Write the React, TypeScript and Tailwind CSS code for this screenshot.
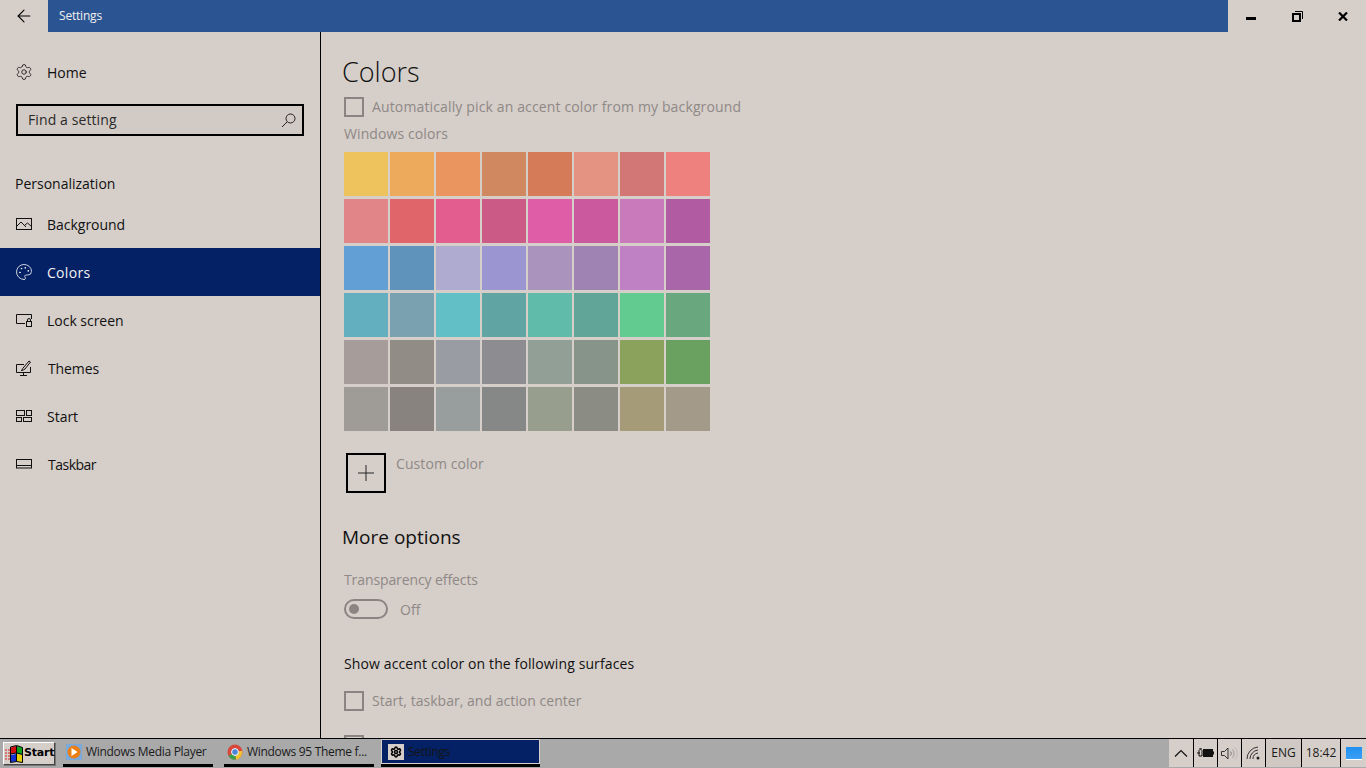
import React from "react";
import { ArrowLeft, Settings as Gear, Palette, Plus } from "lucide-react";

const swatches = [
  ["#eec35d", "#eeaa5c", "#ea955f", "#cf8860", "#d67b58", "#e49383", "#d27776", "#ee807d"],
  ["#e28589", "#df656b", "#e35d8f", "#cb5b86", "#df5ca6", "#ca5a9d", "#c87abb", "#b05ba2"],
  ["#619fd4", "#5f93bb", "#aeaad0", "#9b96d1", "#aa93bd", "#9f84b3", "#bf81c4", "#a967a9"],
  ["#63afc0", "#7aa1b0", "#61bfc5", "#61a4a4", "#61bbaa", "#60a598", "#61cb90", "#69a77e"],
  ["#a69c99", "#928c87", "#9a9ca4", "#8c8c91", "#919f96", "#87948a", "#8aa25c", "#6ba160"],
  ["#9f9b97", "#88837e", "#989e9d", "#868787", "#979e8d", "#8b8c83", "#a59b78", "#a39a89"],
];

const ImageIcon = () => (
  <svg width="16" height="12" viewBox="0 0 16 12" fill="none" stroke="currentColor" strokeWidth="1">
    <rect x="0.5" y="0.5" width="15" height="11" />
    <path d="M1 8l4-4 5 5M9 7l2.5-2 4 3.5" />
  </svg>
);
const LockIcon = () => (
  <svg width="16" height="13" viewBox="0 0 16 13" fill="none" stroke="currentColor" strokeWidth="1">
    <path d="M9 9.5H0.5V0.5H15.5V5" />
    <rect x="10.5" y="7.5" width="5" height="5" />
    <path d="M11.5 7.5V6a1.5 1.5 0 0 1 3 0v1.5" />
  </svg>
);
const ThemesIcon = () => (
  <svg width="16" height="16" viewBox="0 0 16 16" fill="none" stroke="currentColor" strokeWidth="1">
    <path d="M8 4.5H0.5V12.5H14.5V7" />
    <path d="M7.5 12.5v2.5M4 15.5h7" />
    <path d="M5 10.5c1 0 1.5-1 1.5-1.800L13 1l1.500 1-5.500 7c-1 .8-2.500 1.500-4 1.500z" />
  </svg>
);
const StartIcon = () => (
  <svg width="16" height="12" viewBox="0 0 16 12" fill="none" stroke="currentColor" strokeWidth="1">
    <rect x="0.5" y="0.5" width="8" height="5" />
    <rect x="10.500" y="0.5" width="5" height="5" />
    <rect x="0.5" y="7.500" width="5" height="4" />
    <rect x="7.500" y="7.500" width="8" height="4" />
  </svg>
);
const TaskbarIcon = () => (
  <svg width="16" height="10" viewBox="0 0 16 10" fill="none" stroke="currentColor" strokeWidth="1">
    <rect x="0.5" y="0.5" width="15" height="8.500" />
    <path d="M0.5 6.500h15" />
  </svg>
);

const font = "font-['Open_Sans','Noto_Sans',sans-serif]";

function NavItem({ icon, label, active, labelClass }: { icon: React.ReactNode; label: string; active?: boolean; labelClass?: string }) {
  return (
    <div
      className={
        active
          ? "h-12 flex items-center bg-[#042165] text-[#f2f2f2]"
          : "h-12 flex items-center text-[#111]"
      }
    >
      <div className="w-[47px] pl-4 flex items-center">{icon}</div>
      <span className={labelClass ?? "text-[14px] tracking-[-0.02px]"}>{label}</span>
    </div>
  );
}

function Check({ label, tracking }: { label: string; tracking: string }) {
  return (
    <div className="flex items-center gap-2 h-5">
      <div className="w-5 h-5 border-2 border-[#8a8583] shrink-0" />
      <span className={`text-[14px] ${tracking} pb-[2px] text-[#8e8986] whitespace-nowrap`}>{label}</span>
    </div>
  );
}

function TaskButton({ icon, label, active }: { icon: React.ReactNode; label: string; active?: boolean }) {
  return (
    <div className="w-full h-full flex flex-col justify-end">
      <div
        className={
          active
            ? "flex-1 flex items-center gap-1 pl-[6px] bg-[#042165] text-[#141414] border-x border-t border-[#d6cec9]"
            : "flex-1 flex items-center gap-1 pl-[3px] text-[#1b1b1b]"
        }
      >
        {icon}
        <span className="text-[12px] tracking-[-0.3px] pt-px whitespace-nowrap">{label}</span>
      </div>
      <div className={active ? "h-1 bg-black border-t border-[#d6cec9]" : "h-[3px] bg-black"} />
    </div>
  );
}

function Tray({ w, tone, children }: { w: string; tone?: string; children: React.ReactNode }) {
  return (
    <div className={`${w} h-full ${tone ?? "bg-[#d6cec9]"} flex items-center justify-center text-[12px] text-[#1b1b1b]`}>
      {children}
    </div>
  );
}

export default function App() {
  return (
    <div className={`${font} w-[1366px] h-[768px] overflow-hidden flex flex-col bg-[#d6cec9]`}>
      <header className="h-8 flex shrink-0">
        <div className="w-12 flex items-center justify-center text-black">
          <ArrowLeft size={20} strokeWidth={1.3} />
        </div>
        <div className="flex-1 bg-[#2b5592] flex items-center pl-[11px] text-[12px] tracking-[-0.2px] text-[#f0f0f0]">Settings</div>
        <div className="w-[138px] flex text-black">
          <div className="flex-1 flex items-center justify-center">
            <div className="w-[10px] h-[3px] bg-black mt-[5px]" />
          </div>
          <div className="flex-1 flex items-center justify-center">
            <svg width="11" height="11" viewBox="0 0 11 11" fill="none" stroke="black">
              <rect x="1" y="3" width="7" height="7" strokeWidth="2" />
              <path d="M3 .5h7.500V8" strokeWidth="1" />
            </svg>
          </div>
          <div className="flex-1 flex items-center justify-center">
            <svg width="10" height="9" viewBox="0 0 10 9" stroke="black" strokeWidth="2.200">
              <path d="M1 .5l8 8M9 .5l-8 8" />
            </svg>
          </div>
        </div>
      </header>

      <main className="flex-1 flex min-h-0 overflow-hidden">
        <aside className="w-[321px] shrink-0 border-r border-black flex flex-col">
          <div className="h-[48px] mt-4 flex items-center text-[#111]">
            <div className="w-[47px] pl-[15px] flex items-center"><Gear size={18} strokeWidth={1.1} /></div>
            <span className="text-[14px]">Home</span>
          </div>
          <div className="mx-4 mt-2 h-8 w-[288px] border-2 border-black bg-[#d2cac5] flex items-center justify-between pl-[10px] pr-[6px]">
            <span className="text-[14px] tracking-[0.1px] pb-[2px] text-[#2a2a2a]">Find a setting</span>
            <svg width="15" height="15" viewBox="0 0 15 15" fill="none" stroke="#222" strokeWidth="1">
              <circle cx="9.500" cy="5.500" r="4.500" />
              <path d="M6.200 8.800L1 14" />
            </svg>
          </div>
          <div className="mt-[35px] pl-[15px] h-[24px] flex items-center text-[14px] text-[#111]">Personalization</div>
          <div className="mt-[5px]">
            <NavItem icon={<ImageIcon />} label="Background" />
            <NavItem icon={<Palette size={18} strokeWidth={1.1} className="-ml-px" />} label="Colors" labelClass="text-[14px] tracking-[0.3px]" active />
            <NavItem icon={<LockIcon />} label="Lock screen" />
            <NavItem icon={<ThemesIcon />} label="Themes" labelClass="text-[14px] tracking-[-0.1px] ml-px" />
            <NavItem icon={<StartIcon />} label="Start" />
            <NavItem icon={<TaskbarIcon />} label="Taskbar" labelClass="text-[14px] tracking-[-0.5px] ml-px" />
          </div>
        </aside>

        <section className="flex-1 pl-[23px] min-w-0 overflow-hidden">
          <h1 className="mt-[19px] h-[42px] -ml-[2px] flex items-center text-[27px] font-light text-[#111]">Colors</h1>
          <div className="mt-[4px]"><Check label="Automatically pick an accent color from my background" tracking="tracking-[0.14px]" /></div>
          <div className="mt-[6px] h-5 flex items-center text-[14px] tracking-[0.1px] text-[#8e8986]">Windows colors</div>
          <div className="mt-[9px] flex flex-col gap-[3px]">
            {swatches.map((row, i) => (
              <div key={i} className="flex gap-[2px]">
                {row.map((c) => (
                  <div key={c} className="w-11 h-11" style={{ backgroundColor: c }} />
                ))}
              </div>
            ))}
          </div>
          <div className="mt-[22px] ml-[2px] flex items-start gap-[10px]">
            <div className="w-10 h-10 border-2 border-black flex items-center justify-center text-[#222]">
              <Plus size={26} strokeWidth={0.9} />
            </div>
            <span className="h-5 flex items-center text-[14px] tracking-[0.08px] text-[#8e8986]">Custom color</span>
          </div>
          <h2 className="mt-[29px] -ml-[2px] h-[30px] flex items-center text-[19px] text-[#111]">More options</h2>
          <div className="mt-[17px] h-5 flex items-center text-[14px] tracking-[-0.1px] text-[#8e8986]">Transparency effects</div>
          <div className="mt-[10px] flex items-center gap-[12px] h-5">
            <div className="w-11 h-5 rounded-full border-2 border-[#8a8583] flex items-center pl-[3px]">
              <div className="w-[10px] h-[10px] rounded-full bg-[#8a8583]" />
            </div>
            <span className="text-[14px] text-[#8e8986]">Off</span>
          </div>
          <div className="mt-[34px] h-5 flex items-center text-[14px] tracking-[0.12px] text-[#111]">Show accent color on the following surfaces</div>
          <div className="mt-[18px]"><Check label="Start, taskbar, and action center" tracking="tracking-[0.03px]" /></div>
          <div className="mt-[24px]"><Check label="" tracking="" /></div>
        </section>
      </main>

      <footer className="h-[30px] shrink-0 bg-[#a9a9a9] border-t border-black flex pb-px">
        <div className="ml-[3px] mt-[3px] w-[52px] h-[23px] bg-[#d6cec9] border border-t-white border-l-white border-r-[#444] border-b-[#444] flex items-center pl-[1px] shadow-[1px_1px_0_#777]">
          <svg width="19" height="18" viewBox="0 0 19 18" className="shrink-0">
            <path d="M6 2.500l5-1.500v7l-5 1z" fill="#d01010" />
            <path d="M12 1l5 1.500v7L12 8z" fill="#10a020" />
            <path d="M6 10l5-1v7.500L6 17z" fill="#1030d0" />
            <path d="M12 9l5 1v7l-5-.5z" fill="#e8d000" />
            <path d="M5.500 2l6-1.500 6 2v15l-6-1-6 1z" fill="none" stroke="black" />
            <path d="M11.500 1v16M5.500 9l6-1 6 1.500" fill="none" stroke="black" />
            <path d="M0 5h5M0 8h5M0 11h5M0 14h5" stroke="#d02020" strokeDasharray="2 1" />
          </svg>
          <span className="text-[11px] font-bold text-black font-['DejaVu_Sans',sans-serif] tracking-[-0.2px]">Start</span>
        </div>
        <div className="ml-2 h-full w-[150px]">
          <TaskButton
            label="Windows Media Player"
            icon={
              <svg width="16" height="16" viewBox="0 0 16 16" className="shrink-0">
                <rect x="0" y="0" width="16" height="16" rx="1" fill="#7aa9dc" />
                <circle cx="8" cy="8" r="6.500" fill="#ec7f13" />
                <path d="M5.500 4l6 4-6 4z" fill="white" />
              </svg>
            }
          />
        </div>
        <div className="ml-[11px] h-full w-[150px]">
          <TaskButton
            label="Windows 95 Theme f..."
            icon={
              <svg width="16" height="16" viewBox="0 0 16 16" className="shrink-0">
                <circle cx="8" cy="8" r="7.500" fill="#d9463a" />
                <path d="M8 8L1.500 12a7.500 7.500 0 0 0 7.500 3.500z" fill="#3a9f4b" />
                <path d="M8 8l7.200-1.200A7.500 7.500 0 0 1 9 15.500z" fill="#f2c230" />
                <circle cx="8" cy="8" r="3.400" fill="#4a86d8" stroke="white" />
              </svg>
            }
          />
        </div>
        <div className="ml-[7px] h-full w-[159px]">
          <TaskButton
            active
            label="Settings"
            icon={
              <div className="w-4 h-4 bg-[#d6cec9] flex items-center justify-center text-black">
                <Gear size={12} strokeWidth={3} />
              </div>
            }
          />
        </div>
        <div className="flex-1" />
        <div className="flex gap-px bg-black h-full">
          <Tray w="w-6">
            <svg width="14" height="8" viewBox="0 0 14 8" fill="none" stroke="#111" strokeWidth="1.200"><path d="M1 7.500L7 1.500l6 6" /></svg>
          </Tray>
          <Tray w="w-[23px]">
            <svg width="17" height="11" viewBox="0 0 17 11">
              <rect x="6" y="1" width="10" height="8" fill="#111" />
              <rect x="16" y="3.500" width="1" height="3" fill="#111" />
              <path d="M0 5h3M2 2v6h3V2M3 0v2M4 0v2" stroke="#111" fill="none" />
            </svg>
          </Tray>
          <Tray w="w-[23px]">
            <svg width="17" height="15" viewBox="0 0 17 15" fill="none" stroke="#333" strokeWidth="1">
              <path d="M.5 5.500h3L7 2v11L3.500 9.500h-3z" />
              <path d="M9.500 5.500a3 3 0 0 1 0 4" stroke="#777" />
              <path d="M11.500 3.500a6 6 0 0 1 0 8" stroke="#999" />
              <path d="M13.500 1.500a8 8 0 0 1 0 12" stroke="#bbb" />
            </svg>
          </Tray>
          <Tray w="w-[23px]">
            <svg width="16" height="14" viewBox="0 0 16 14" fill="none" stroke="#333" strokeWidth="1">
              <path d="M1 13a12 12 0 0 1 11-12" />
              <path d="M4 13a9 9 0 0 1 8-9" />
              <path d="M7 13a6 6 0 0 1 5-6" />
              <circle cx="12" cy="12" r="1.500" fill="#222" stroke="none" />
            </svg>
          </Tray>
          <Tray w="w-[35px]" tone="bg-[#d0c8c3]">ENG</Tray>
          <Tray w="w-[38px]">18:42</Tray>
          <Tray w="w-[25px]">
            <div className="w-4 h-[13px] bg-gradient-to-b from-[#1e90f0] to-[#3aa0f5] border-b border-white" />
          </Tray>
        </div>
      </footer>
    </div>
  );
}
